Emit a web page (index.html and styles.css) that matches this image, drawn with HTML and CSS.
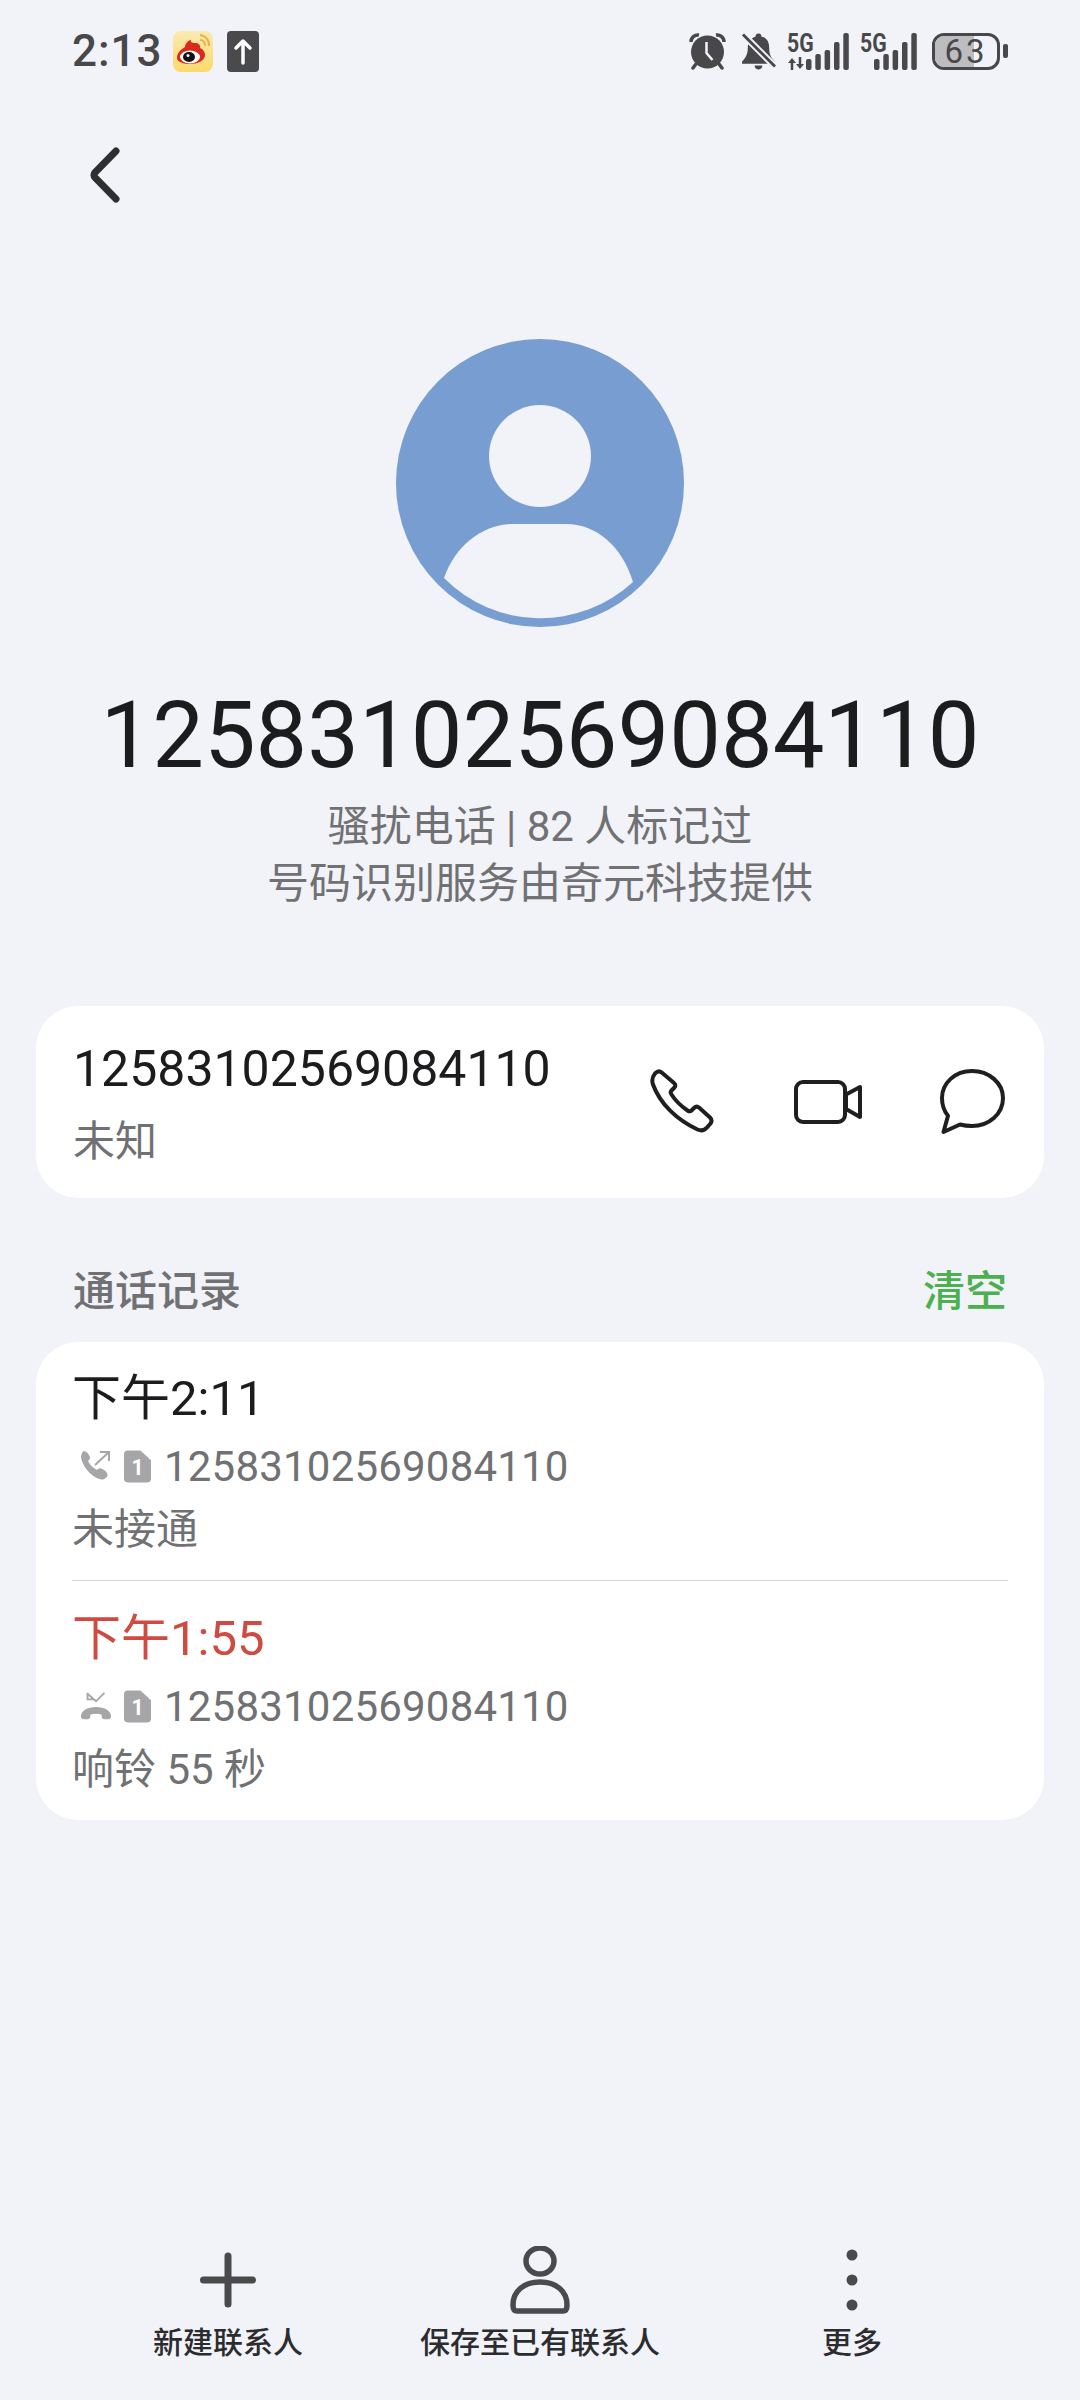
FILE: index.html
```html
<!DOCTYPE html>
<html lang="zh-CN">
<head>
    <meta charset="UTF-8">
    <title>12583102569084110</title>
    <link rel="stylesheet" href="styles.css">
</head>
<body>
    <div class="status-bar">
        <div class="status-left">
            <span class="clock">2:13</span>
            <svg class="weibo-icon" width="40" height="41" viewBox="0 0 40 41">
                <defs>
                    <linearGradient id="weibo-bg" x1="0" y1="0" x2="0" y2="1">
                        <stop offset="0" stop-color="#fbe9b0"/>
                        <stop offset="1" stop-color="#fbd96e"/>
                    </linearGradient>
                </defs>
                <rect width="40" height="41" rx="8" fill="url(#weibo-bg)"/>
                <path d="M27 4a10 10 0 0 1 9 11M27 9a5 5 0 0 1 5 6" fill="none" stroke="#eeb04a" stroke-width="2"/>
                <path d="M4 27c0-6 5-9 8-11 0-3 3-7 6-7-1 2 1 3 4 3 3 0 6 2 5 5 3 1 5 4 5 7 0 6-8 9-15 9-6 0-13-2-13-6z" fill="#d92a1c"/>
                <ellipse cx="17" cy="26" rx="10" ry="6.500" fill="#fff"/>
                <ellipse cx="16" cy="26" rx="6" ry="5" fill="#111"/>
                <circle cx="15" cy="24.500" r="1.500" fill="#fff"/>
            </svg>
            <svg class="upload-icon" width="32" height="41" viewBox="0 0 32 41">
                <rect width="32" height="41" rx="4" fill="#4a4a4c"/>
                <path d="M16 32V10M9 17l7-7 7 7" fill="none" stroke="#fff" stroke-width="3.500" stroke-linecap="round" stroke-linejoin="round"/>
            </svg>
        </div>
        <div class="status-right">
            <svg width="37" height="38" viewBox="0 0 37 38">
                <path d="M2 10a7 7 0 0 1 8-7M35 10a7 7 0 0 0-8-7" fill="none" stroke="#48484a" stroke-width="3.500"/>
                <path d="M7 32l-3 4M30 32l3 4" stroke="#48484a" stroke-width="3.500" stroke-linecap="round"/>
                <circle cx="18.500" cy="20" r="16.500" fill="#48484a"/>
                <path d="M17.500 10v11l6 7" fill="none" stroke="#f1f3f8" stroke-width="2.500"/>
            </svg>
            <svg class="bell-icon" width="35" height="40" viewBox="0 0 36 40">
                <path d="M18 2c2 0 3 1 3 3 6 2 8 6 8 12 0 7 2 10 6 14v2H1v-2c3-3 6-7 6-14 0-6 3-10 8-12 0-2 1-3 3-3z" fill="#48484a"/>
                <path d="M14 35h8c0 3-2 4-4 4s-4-1-4-4z" fill="#48484a"/>
                <path d="M1 2l34 34" stroke="#f1f3f8" stroke-width="7"/>
                <path d="M2 3l33 33" stroke="#48484a" stroke-width="3"/>
            </svg>
            <div class="signal">
                <span class="net-label">5G</span>
                <svg class="arrows" width="16" height="13" viewBox="0 0 16 13">
                    <path d="M4 13V5M12 0v8" stroke="#48484a" stroke-width="2.500"/>
                    <path d="M0 6l4-5 4 5zM8 7l4 5 4-5z" fill="#48484a"/>
                </svg>
                <svg class="bars" width="43" height="37" viewBox="0 0 43 37">
                    <rect x="0" y="26" width="5.500" height="11" rx="2" fill="#48484a"/>
                    <rect x="9.300" y="21" width="5.500" height="16" rx="2" fill="#48484a"/>
                    <rect x="18.600" y="17" width="5.500" height="20" rx="2" fill="#48484a"/>
                    <rect x="28" y="9" width="5.500" height="28" rx="2" fill="#48484a"/>
                    <rect x="37.300" y="0" width="5.500" height="37" rx="2" fill="#48484a"/>
                </svg>
            </div>
            <div class="signal signal-two">
                <span class="net-label">5G</span>
                <svg class="bars" width="43" height="37" viewBox="0 0 43 37">
                    <rect x="0" y="26" width="5.500" height="11" rx="2" fill="#48484a"/>
                    <rect x="9.300" y="21" width="5.500" height="16" rx="2" fill="#48484a"/>
                    <rect x="18.600" y="17" width="5.500" height="20" rx="2" fill="#48484a"/>
                    <rect x="28" y="9" width="5.500" height="28" rx="2" fill="#48484a"/>
                    <rect x="37.300" y="0" width="5.500" height="37" rx="2" fill="#48484a"/>
                </svg>
            </div>
            <div class="battery">
                <div class="battery-body">
                    <div class="battery-fill"></div>
                    <span class="battery-level">63</span>
                </div>
                <div class="battery-tip"></div>
            </div>
        </div>
    </div>

    <div class="top-bar">
        <svg width="34" height="56" viewBox="0 0 34 56">
            <path d="M27 4L6 25.500a3.500 3.500 0 0 0 0 5L27 52" fill="none" stroke="#2f2f31" stroke-width="7" stroke-linecap="round"/>
        </svg>
    </div>

    <div class="profile">
        <svg class="avatar" width="288" height="288" viewBox="0 0 288 288">
            <circle cx="144" cy="144" r="144" fill="#789dd0"/>
            <circle cx="144" cy="117" r="51" fill="#f1f3f8"/>
            <path d="M48 239C60 205 88 185 118 185h52c30 0 56 22 67 58A136 136 0 0 1 48 239z" fill="#f1f3f8"/>
        </svg>
        <h1 class="caller-number">12583102569084110</h1>
        <p class="caller-info">骚扰电话 | 82 人标记过</p>
        <p class="caller-info">号码识别服务由奇元科技提供</p>
    </div>

    <div class="card number-card">
        <div class="number-text">
            <div class="number-main">12583102569084110</div>
            <div class="number-type">未知</div>
        </div>
        <div class="number-actions">
            <svg width="66" height="66" viewBox="0 0 66 66">
                <path class="action-stroke" d="M5 4.500C7.500 2 10 2 12 3.700L24 14c2 1.500 1.500 3.500 0 5l-2.500 2.500c-1 1-1 2.500 0 4C25 31 31 37 37.500 41.500c1.500 1 3 1 4 0L44 39c1.500-1.500 3.500-1.800 5-.5l11 10c2 2 2 4 .5 6L57 58.500c-2.500 3-6 3.500-9.500 2C27 51 10 35 2.800 15 1.700 11 2.500 7.500 5 4.500z"/>
            </svg>
            <svg width="68" height="44" viewBox="0 0 68 44">
                <rect class="action-stroke" x="2" y="2" width="49" height="40" rx="7"/>
                <path class="action-stroke" d="M52 14.500L66 7v30l-14-8z"/>
            </svg>
            <svg width="66" height="66" viewBox="0 0 66 66">
                <path class="action-stroke" d="M8 46.700L3.500 63 20 55.500c3 .8 7 1.500 12 1.500 17 0 31-12 31-28C63 14 49 2 32 2 15 2 2 14 2 29c0 7 2 13 6 17.700z"/>
            </svg>
        </div>
    </div>

    <div class="section-head">
        <span class="section-title">通话记录</span>
        <span class="section-clear">清空</span>
    </div>

    <div class="card log-card">
        <div class="log-row">
            <div class="log-time">下午2:11</div>
            <div class="log-line">
                <svg class="log-icon" width="32" height="32" viewBox="0 0 32 32">
                    <path d="M3 1.500c3-1.500 6 3 7 5.500.5 1.500-1 3-2 4 2 4 5 7 9 9 1-1 2.500-2 4-1.500 3 1 6 3 6.500 6 .5 2-3 5.500-6 5C12 28 2 16 1 7c0-2 1-4.500 2-5.500z" fill="#a6a6a8"/>
                    <path d="M15 15L29 2M20 2h9v9" fill="none" stroke="#a6a6a8" stroke-width="2"/>
                </svg>
                <svg class="sim-icon" width="27" height="33" viewBox="0 0 28 33">
                    <path d="M4 0h13l11 10v19a4 4 0 0 1-4 4H4a4 4 0 0 1-4-4V4a4 4 0 0 1 4-4z" fill="#a6a6a8"/>
                    <text x="14" y="25" class="sim-digit">1</text>
                </svg>
                <span class="log-number">12583102569084110</span>
            </div>
            <div class="log-desc">未接通</div>
        </div>
        <div class="log-row log-row-missed">
            <div class="log-time">下午1:55</div>
            <div class="log-line">
                <svg class="log-icon" width="32" height="32" viewBox="0 0 34 32">
                    <path d="M1 27c0-6 7-10 16-10s16 4 16 10c0 2-1 3-3 3h-4c-2 0-3-1-3-3v-2c-4-1-8-1-12 0v2c0 2-1 3-3 3H4c-2 0-3-1-3-3z" fill="#a6a6a8"/>
                    <path d="M8 2v7h7M8 3l9 8 9-9" fill="none" stroke="#a6a6a8" stroke-width="2"/>
                </svg>
                <svg class="sim-icon" width="27" height="33" viewBox="0 0 28 33">
                    <path d="M4 0h13l11 10v19a4 4 0 0 1-4 4H4a4 4 0 0 1-4-4V4a4 4 0 0 1 4-4z" fill="#a6a6a8"/>
                    <text x="14" y="25" class="sim-digit">1</text>
                </svg>
                <span class="log-number">12583102569084110</span>
            </div>
            <div class="log-desc">响铃 55 秒</div>
        </div>
    </div>

    <div class="bottom-nav">
        <div class="nav-item">
            <div class="nav-icon">
                <svg width="56" height="56" viewBox="0 0 56 56">
                    <path d="M28 4v48M3.500 28h49" fill="none" stroke="#4a4a4c" stroke-width="7" stroke-linecap="round"/>
                </svg>
            </div>
            <span class="nav-label">新建联系人</span>
        </div>
        <div class="nav-item">
            <div class="nav-icon">
                <svg width="60" height="68" viewBox="0 0 60 68">
                    <ellipse cx="30" cy="15" rx="14" ry="13" fill="none" stroke="#4a4a4c" stroke-width="5.500"/>
                    <path d="M3 59C3 45 14 36 30 36s27 9 27 23c0 4-1 6-4 6H7c-3 0-4-2-4-6z" fill="none" stroke="#4a4a4c" stroke-width="5.500"/>
                </svg>
            </div>
            <span class="nav-label">保存至已有联系人</span>
        </div>
        <div class="nav-item">
            <div class="nav-icon">
                <svg width="12" height="62" viewBox="0 0 12 62">
                    <circle cx="6" cy="6" r="5.500" fill="#4a4a4c"/>
                    <circle cx="6" cy="31" r="5.500" fill="#4a4a4c"/>
                    <circle cx="6" cy="56" r="5.500" fill="#4a4a4c"/>
                </svg>
            </div>
            <span class="nav-label">更多</span>
        </div>
    </div>
</body>
</html>
```

FILE: styles.css
```css
* {
    box-sizing: border-box;
    margin: 0;
    padding: 0;
    font-family: Roboto, 'Noto Sans CJK SC', sans-serif;
}

body {
    background-color: #f1f3f8;
    width: 1080px;
    height: 2400px;
    display: flex;
    flex-direction: column;
    overflow: hidden;
}

.status-bar {
    display: flex;
    justify-content: space-between;
    align-items: center;
    height: 42px;
    margin-top: 30px;
    padding: 0 72px;
}

.status-left,
.status-right {
    display: flex;
    align-items: center;
}

.clock {
    font-size: 44px;
    font-weight: 500;
    letter-spacing: 1px;
    color: #48484a;
    margin-right: 10px;
}

.upload-icon {
    margin-left: 14px;
}

.status-right {
    gap: 11px;
}

.bell-icon {
    margin-left: 4px;
}

.signal {
    position: relative;
    width: 62px;
    height: 37px;
}

.signal-two {
    width: 57px;
}

.net-label {
    position: absolute;
    left: 0;
    top: -4px;
    font-size: 25px;
    line-height: 30px;
    font-weight: 700;
    transform: scaleX(0.85);
    transform-origin: left;
    color: #48484a;
}

.signal .arrows {
    position: absolute;
    left: 1px;
    bottom: 0;
}

.signal .bars {
    position: absolute;
    right: 0;
    bottom: 0;
}

.battery {
    display: flex;
    align-items: center;
    gap: 3px;
    margin-left: 4px;
}

.battery-body {
    position: relative;
    width: 68px;
    height: 37px;
    border: 3.5px solid #48484a;
    border-radius: 12px;
    overflow: hidden;
    display: flex;
    align-items: center;
    justify-content: center;
}

.battery-fill {
    position: absolute;
    left: 0;
    top: 0;
    bottom: 0;
    width: 63%;
    background-color: #bdbdbf;
}

.battery-level {
    position: relative;
    font-size: 33px;
    letter-spacing: 3px;
    color: #48484a;
}

.battery-tip {
    width: 5px;
    height: 14px;
    border-radius: 2px;
    background-color: #48484a;
}

.top-bar {
    margin-top: 75px;
    padding-left: 89px;
    height: 56px;
}

.top-bar svg {
    display: block;
}

.profile {
    display: flex;
    flex-direction: column;
    align-items: center;
    margin-top: 136px;
}

.avatar {
    display: block;
    margin-bottom: 65px;
}

.caller-number {
    font-size: 92px;
    font-weight: 400;
    line-height: 88px;
    color: #1c1c1e;
    margin-bottom: 18px;
}

.caller-info {
    font-size: 42px;
    line-height: 57px;
    color: #717173;
}

.card {
    background-color: #fff;
    border-radius: 42px;
    margin: 0 36px;
}

.number-card {
    display: flex;
    justify-content: space-between;
    align-items: center;
    height: 192px;
    margin-top: 94px;
    padding: 0 38px 0 37px;
}

.number-text {
    padding-top: 6px;
}

.number-main {
    font-size: 50px;
    line-height: 62px;
    color: #1c1c1e;
}

.number-type {
    font-size: 42px;
    line-height: 60px;
    margin-top: 12px;
    color: #717173;
}

.number-actions {
    display: flex;
    align-items: center;
    gap: 78px;
}

.action-stroke {
    fill: none;
    stroke: #1f1f21;
    stroke-width: 4;
    stroke-linejoin: round;
}

.section-head {
    display: flex;
    justify-content: space-between;
    align-items: center;
    height: 60px;
    margin-top: 59px;
    padding: 0 73px;
    font-size: 42px;
}

.section-title {
    color: #717173;
    font-weight: 500;
}

.section-clear {
    color: #4caf50;
    font-weight: 500;
}

.log-card {
    height: 478px;
    margin-top: 25px;
    padding: 0 36px;
}

.log-row {
    height: 238px;
    padding-top: 27px;
}

.log-row-missed {
    height: 240px;
    padding-top: 28px;
    border-top: 1px solid #d9d9db;
}

.log-time {
    font-size: 49px;
    line-height: 60px;
    color: #1c1c1e;
}

.log-row-missed .log-time {
    color: #cf4b41;
}

.log-line {
    display: flex;
    align-items: center;
    height: 48px;
    margin-top: 13px;
    padding-left: 8px;
}

.log-icon {
    margin-right: 12px;
}

.sim-icon {
    margin-right: 13px;
}

.sim-digit {
    font-size: 22px;
    font-weight: 700;
    fill: #fff;
    text-anchor: middle;
}

.log-number {
    font-size: 42px;
    letter-spacing: 0.2px;
    color: #717173;
}

.log-desc {
    font-size: 42px;
    line-height: 52px;
    margin-top: 14px;
    color: #717173;
}

.bottom-nav {
    display: grid;
    grid-template-columns: repeat(3, 1fr);
    margin-top: auto;
    padding: 0 72px 37px;
}

.nav-item {
    display: flex;
    flex-direction: column;
    align-items: center;
    gap: 9px;
}

.nav-icon {
    display: flex;
    align-items: center;
    justify-content: center;
    height: 68px;
}

.nav-label {
    font-size: 30px;
    line-height: 40px;
    font-weight: 500;
    color: #2c2c2e;
}
```
